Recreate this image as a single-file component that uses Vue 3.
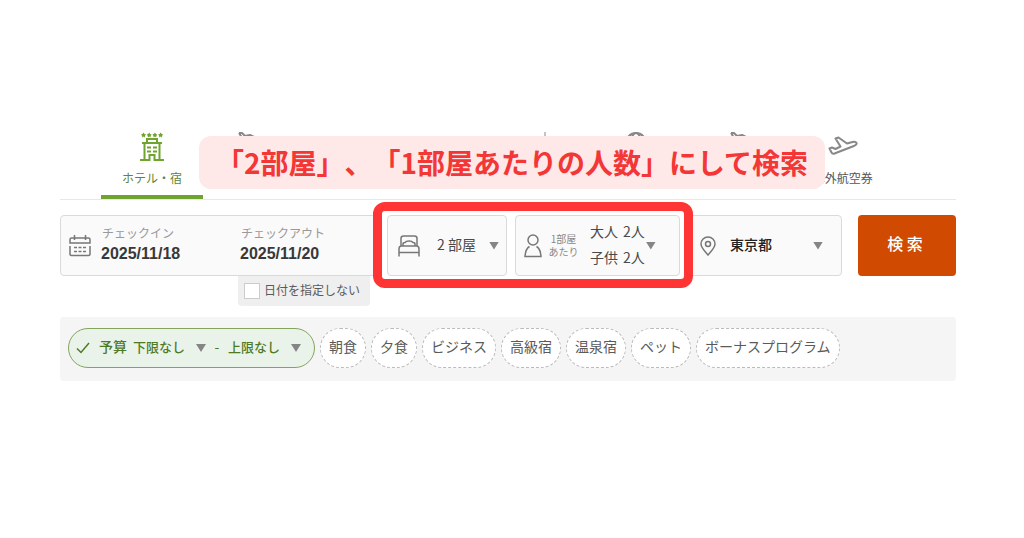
<script setup>
import { ref } from 'vue'

const hiddenTabs = [
  { id: 'air-hotel', label: '航空券＋宿', icon: 'plane' },
  { id: 'bus', label: 'バス', icon: 'none' },
  { id: 'car', label: 'レンタカー', icon: 'none' },
  { id: 'sights', label: '観光', icon: 'tower' },
  { id: 'overseas', label: '海外', icon: 'globe' },
  { id: 'overseas-tour', label: '海外ツアー', icon: 'plane' },
]
const chips = ['朝食', '夕食', 'ビジネス', '高級宿', '温泉宿', 'ペット', 'ボーナスプログラム']

const checkIn = ref('2025/11/18')
const checkOut = ref('2025/11/20')
const noDate = ref(false)
const rooms = ref('2')
const area = ref('東京都')
const minPrice = ref('下限なし')
const maxPrice = ref('上限なし')
</script>

<template>
  <main class="page">
    <nav class="tabs">
      <a class="tab active" href="#hotel">
        <svg class="hotel" width="24" height="30" viewBox="0 0 24 30" fill="none" stroke="currentColor" stroke-width="2">
          <path d="M3.500.5l1 1.500 1.500.5-1 1.200L4.800 5.500 3.500 4.600l-1.300.9L2 3.700 1 2.500 2.500 2zM9.200.5l1 1.500 1.500.5-1 1.200-.2 1.800-1.300-.9-1.300.9-.2-1.800-1-1.200L8.200 2zM14.900.5l1 1.500 1.500.5-1 1.200-.2 1.800-1.300-.9-1.300.9-.2-1.800-1-1.200L13.900 2zM20.600.5l1 1.500 1.500.5-1 1.200-.2 1.800-1.300-.9-1.300.9-.2-1.800-1-1.200L19.600 2z" fill="currentColor" stroke="none" />
          <path d="M7 10V7h10v3M2 11h20M4.500 11v16M19.500 11v16M0 28h9.500v-5h5v5H24" />
          <path d="M7 15.500h4M13 15.500h4M7 19.500h4M13 19.500h4" />
        </svg>
        <span>ホテル・宿</span>
      </a>
      <a v-for="tab in hiddenTabs" :key="tab.id" class="tab" :href="'#' + tab.id" :aria-label="tab.label">
        <svg v-if="tab.icon === 'plane'" class="peek" width="30" height="20" viewBox="0 0 30 20" fill="none" stroke="currentColor" stroke-width="2" stroke-linejoin="round">
          <path d="M2 1h3l3 3 5-1 4 2 8 3-9 5-9 3M2 1l5 8" />
        </svg>
        <svg v-else-if="tab.icon === 'tower'" class="peek" width="30" height="20" viewBox="0 0 30 20" fill="none" stroke="currentColor" stroke-width="1">
          <path d="M13 0v6l-5 13M13 6l5 13M9 13h8" />
        </svg>
        <svg v-else-if="tab.icon === 'globe'" class="peek globe" width="22" height="22" viewBox="0 0 22 22" fill="none" stroke="currentColor" stroke-width="2">
          <circle cx="11" cy="11" r="10" /><ellipse cx="11" cy="11" rx="5" ry="10" /><path d="M1 11h20" />
        </svg>
      </a>
      <a class="tab" href="#overseas-air">
        <svg class="takeoff" width="30" height="20" viewBox="0 0 30 20" fill="none" stroke="currentColor" stroke-width="2" stroke-linejoin="round" stroke-linecap="round">
          <path d="M1.500 12.500l2.500-1 3.500 1.500 5-2.500L7.500 2.500l3-1 8.500 6 5.500-1.500c2-.5 3.500 0 4 1s-.5 2-2 2.700L6.500 17.500c-1.500.5-2.500 0-3-1z" />
        </svg>
        <span>海外航空券</span>
      </a>
      <strong class="banner">「2部屋」、「1部屋あたりの人数」にして検索</strong>
    </nav>

    <form class="search" @submit.prevent>
      <div class="field dates">
        <svg width="22" height="22" viewBox="0 0 22 22" fill="none" stroke="currentColor" stroke-width="1.500">
          <path d="M1 8V4.500Q1 3 2.500 3h17Q21 3 21 4.500V8zM1 11v8q0 1.500 1.500 1.500h17q1.500 0 1.500-1.500v-8M5.500 0v5M16.500 0v5" />
          <path d="M5 12.500h3M9.500 12.500h3M14 12.500h3M5 16.500h3M9.500 16.500h3M14 16.500h3" />
        </svg>
        <label class="date">
          <span>チェックイン</span>
          <input v-model="checkIn" type="text">
        </label>
        <label class="date">
          <span>チェックアウト</span>
          <input v-model="checkOut" type="text">
        </label>
      </div>

      <div class="guests">
        <label class="field rooms">
          <svg width="22" height="22" viewBox="0 0 22 22" fill="none" stroke="currentColor" stroke-width="1.500">
            <path d="M3 11V3.500Q3 1 5.500 1h11Q19 1 19 3.500V11M1 21.500V14q0-3 2.500-3h15q2.500 0 2.500 3v7.500M1 17.500h20" />
            <path d="M5 11V9q0-1.500 2-1.500Q8 6 11 6t4 1.500q2 0 2 1.500v2" />
          </svg>
          <select v-model="rooms" aria-label="部屋数">
            <option value="1">1 部屋</option>
            <option value="2">2 部屋</option>
            <option value="3">3 部屋</option>
          </select>
          <i class="arrow" />
        </label>
        <button class="field people" type="button" aria-haspopup="dialog">
          <svg width="18" height="24" viewBox="0 0 18 24" fill="none" stroke="currentColor" stroke-width="1.500">
            <circle cx="9" cy="6" r="5" /><path d="M5.500 12.500C3 14 1.300 17.500 1 22.500h16c-.3-5-2-8.500-4.500-10" />
          </svg>
          <span class="per">1部屋<br>あたり</span>
          <span class="count">
            <span><b>大人</b><b>2人</b></span>
            <span><b>子供</b><b>2人</b></span>
          </span>
          <i class="arrow" />
        </button>
      </div>

      <label class="field area">
        <svg width="16" height="20" viewBox="0 0 16 20" fill="none" stroke="currentColor" stroke-width="1.500">
          <path d="M8 19C4 14.500 1 11.500 1 8a7 7 0 0 1 14 0c0 3.500-3 6.500-7 11z" /><circle cx="8" cy="8" r="2.500" />
        </svg>
        <select v-model="area" aria-label="エリア">
          <option>東京都</option>
          <option>大阪府</option>
        </select>
        <i class="arrow" />
      </label>

      <button class="submit" type="submit">検 索</button>
    </form>

    <label class="no-date">
      <input v-model="noDate" type="checkbox">
      <span>日付を指定しない</span>
    </label>

    <section class="filters">
      <div class="budget">
        <svg width="14" height="14" viewBox="0 0 14 14" fill="none" stroke="currentColor" stroke-width="1.500"><path d="M1 7.500l4 4L13 2" /></svg>
        <span class="budget-name">予算</span>
        <label class="price">
          <select v-model="minPrice" aria-label="下限"><option>下限なし</option><option>5,000円</option></select>
          <i class="arrow" />
        </label>
        <span class="dash">-</span>
        <label class="price">
          <select v-model="maxPrice" aria-label="上限"><option>上限なし</option><option>20,000円</option></select>
          <i class="arrow" />
        </label>
      </div>
      <button v-for="chip in chips" :key="chip" class="chip" type="button">{{ chip }}</button>
    </section>
  </main>
</template>

<style>
body {
  margin: 0;
  background: #fff;
}
</style>

<style scoped>
.page {
  padding: 128px 68px 40px 60px;
  font-family: "Noto Sans CJK JP", sans-serif;
  font-size: 14px;
  color: #4a4a4a;
}
.page * {
  box-sizing: border-box;
}
button,
input,
select {
  margin: 0;
  padding: 0;
  border: 0;
  background: transparent;
  color: inherit;
  font: inherit;
}
select {
  appearance: none;
  padding-bottom: 4px;
}
svg {
  flex: none;
}
.tabs {
  position: relative;
  display: flex;
  height: 72px;
  padding: 0 64px 0 41px;
  border-bottom: 1px solid #e8e8e8;
}
.tab {
  flex: 1;
  display: flex;
  flex-direction: column;
  align-items: center;
  color: #888;
  font-size: 12px;
  line-height: 18px;
  text-decoration: none;
  white-space: nowrap;
}
.tab span {
  margin-top: auto;
  margin-bottom: 12px;
  color: #555;
}
.tab.active {
  flex: none;
  width: 102px;
  border-bottom: 4px solid #6fa42f;
  color: #6fa42f;
}
.tab.active span {
  margin-bottom: 8px;
  color: #5f8536;
}
.hotel,
.peek {
  margin-top: 4px;
}
.globe {
  margin-right: 20px;
}
.takeoff {
  margin-top: 8px;
}
.banner {
  position: absolute;
  top: 8px;
  left: 139px;
  right: 131px;
  border-radius: 12px;
  background: #ffe8e8;
  color: #f33636;
  font-size: 28px;
  font-weight: 700;
  line-height: 53px;
  text-align: center;
  white-space: nowrap;
  text-spacing-trim: space-all;
}
.search {
  display: flex;
  gap: 8px;
  margin-top: 15px;
}
.field {
  flex: none;
  display: flex;
  align-items: center;
  height: 61px;
  border: 1px solid #dadada;
  border-radius: 4px;
  background: #fafafa;
}
.field svg {
  color: #777;
}
.arrow {
  flex: none;
  width: 10px;
  height: 8px;
  background: #858585;
  clip-path: polygon(0 0, 100% 0, 50% 100%);
}
.dates {
  flex: 1;
  min-width: 0;
  padding-left: 8px;
}
.date {
  flex: none;
  width: 139px;
  padding-bottom: 4px;
  color: #999;
  font-size: 12px;
}
.date:last-child {
  width: 120px;
}
.dates svg + .date {
  margin-left: 10px;
}
.date span {
  display: block;
  padding-left: 1px;
  line-height: 20px;
}
.date input {
  display: block;
  width: 100px;
  color: #383838;
  font: 700 16px/22px "Liberation Sans", sans-serif;
}
.guests {
  position: relative;
  flex: none;
  display: flex;
  gap: 8px;
}
.guests::after {
  content: "";
  position: absolute;
  inset: -13px -13px -12px -14px;
  border: 9px solid #ff3434;
  border-radius: 12px;
  box-shadow: inset 0 0 0 3px #fff;
  pointer-events: none;
}
.rooms {
  width: 120px;
  padding-left: 10px;
}
.rooms select {
  width: 52px;
  margin-left: 17px;
}
.people {
  width: 165px;
  padding-left: 8px;
  text-align: left;
}
.per {
  width: 33px;
  margin-left: 5px;
  padding-bottom: 2px;
  color: #888;
  font-size: 10px;
  line-height: 13px;
  text-align: center;
}
.count {
  margin-left: 10px;
  padding-bottom: 4px;
  line-height: 26px;
}
.count > span {
  display: flex;
  gap: 5px;
}
.count b {
  font-weight: 400;
}
.people .arrow {
  margin-left: 1px;
}
.area {
  width: 154px;
  padding: 0 18px 0 11px;
}
.area select {
  flex: 1;
  margin-left: 14px;
  color: #222;
  font-weight: 500;
}
.submit {
  flex: none;
  width: 98px;
  margin-left: 8px;
  padding: 0 4px 5px 0;
  border-radius: 4px;
  background: #d04a02;
  color: #fff;
  font-size: 16px;
  font-weight: 500;
}
.no-date {
  display: flex;
  align-items: center;
  gap: 4px;
  width: 132px;
  height: 30px;
  margin-left: 178px;
  padding-left: 6px;
  border-radius: 0 0 4px 4px;
  background: #efefef;
  color: #5a5a5a;
  font-size: 12px;
  white-space: nowrap;
}
.no-date span {
  padding-bottom: 4px;
}
.no-date input {
  appearance: none;
  width: 16px;
  height: 16px;
  border: 1px solid #ccc;
  background: #fff;
}
.filters {
  display: flex;
  flex-wrap: wrap;
  gap: 5px;
  margin-top: 11px;
  padding: 11px 8px 13px;
  border-radius: 4px;
  background: #f5f5f5;
}
.budget {
  display: flex;
  align-items: center;
  width: 247px;
  height: 40px;
  padding-left: 7px;
  border: 1px solid #84a45c;
  border-radius: 20px;
  background: #eaf3ea;
  color: #4f7a25;
  white-space: nowrap;
}
.budget-name {
  margin-left: 9px;
  padding-bottom: 4px;
  font-weight: 500;
}
.price {
  display: flex;
  align-items: center;
}
.budget-name + .price {
  margin-left: 6px;
}
.price select {
  width: 63px;
  font-size: 13px;
  font-weight: 500;
}
.dash {
  width: 22px;
  padding-bottom: 4px;
  text-align: center;
}
.chip {
  height: 40px;
  padding: 0 8px 4px;
  border: 1px dashed #bbb;
  border-radius: 20px;
  background: #fff;
  color: #5a5a5a;
  white-space: nowrap;
}
</style>
